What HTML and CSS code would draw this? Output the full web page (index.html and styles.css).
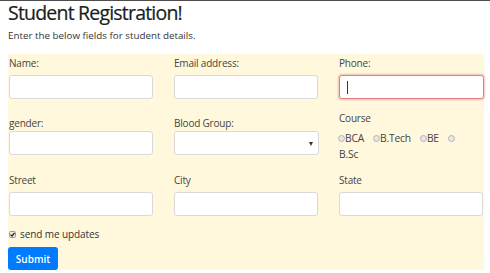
FILE: index.html
```html
<!DOCTYPE html>
<html>
<head>
<meta charset="utf-8">
<link rel="stylesheet" href="styles.css">
</head>
<body>
<h1 class="title">Student Registration!</h1>
<p class="lead">Enter the below fields for student details.</p>
<form class="panel">
  <div class="row row-1">
    <div class="field">
      <label class="lbl">Name:</label>
      <input class="ctl" type="text">
    </div>
    <div class="field">
      <label class="lbl">Email address:</label>
      <input class="ctl" type="text">
    </div>
    <div class="field">
      <label class="lbl">Phone:</label>
      <div class="focus-wrap">
        <input class="ctl ctl-focus" type="text">
        <span class="caret"></span>
      </div>
    </div>
  </div>
  <div class="row row-2">
    <div class="field">
      <label class="lbl lbl-tight">gender:</label>
      <input class="ctl" type="text">
    </div>
    <div class="field">
      <label class="lbl lbl-tight">Blood Group:</label>
      <div class="select">
        <span class="arrow"></span>
      </div>
    </div>
    <div class="field field-course">
      <label class="lbl">Course</label>
      <div class="radios">
        <span class="opt"><span class="dot"></span>BCA</span>
        <span class="opt"><span class="dot"></span>B.Tech</span>
        <span class="opt"><span class="dot"></span>BE</span>
        <span class="opt"><span class="dot"></span></span>
        <span class="opt">B.Sc</span>
      </div>
    </div>
  </div>
  <div class="row row-3">
    <div class="field">
      <label class="lbl">Street</label>
      <input class="ctl" type="text">
    </div>
    <div class="field">
      <label class="lbl">City</label>
      <input class="ctl" type="text">
    </div>
    <div class="field">
      <label class="lbl">State</label>
      <input class="ctl" type="text">
    </div>
  </div>
  <div class="check-row">
    <span class="check">
      <svg width="7" height="7" viewBox="0 0 7 7"><rect x="0.5" y="0.5" width="6" height="6" rx="1" fill="#e8e8e8" stroke="#9a9a9a"/><path d="M1.6 3.6 L3 5 L5.6 1.8" fill="none" stroke="#222" stroke-width="1.3"/></svg>
    </span>
    <span class="check-text">send me updates</span>
  </div>
  <button class="btn" type="button">Submit</button>
</form>
</body>
</html>
```
FILE: styles.css
```css
html, body {
  margin: 0;
  padding: 0;
}
body {
  width: 490px;
  height: 273px;
  overflow: hidden;
  border-top: 1px solid #4d4d4d;
  box-sizing: border-box;
  padding-left: 8px;
  font-family: "Open Sans", "Noto Sans", sans-serif;
  color: #212529;
  background: #fff;
}
.title {
  margin: 0;
  padding-top: 1px;
  font-size: 19.5px;
  font-weight: 500;
  line-height: 22px;
  letter-spacing: -0.8px;
  color: #1a1d20;
  -webkit-text-stroke: 0.2px #1a1d20;
}
.lead {
  margin: 5px 0 0 0;
  font-size: 9.8px;
  line-height: 14px;
  color: #333;
}
.panel {
  margin-top: 11px;
  width: 476px;
  background: #fff8dc;
  padding: 2px 1px 0 1px;
  box-sizing: border-box;
  display: flex;
  flex-direction: column;
}
.row {
  display: grid;
  grid-template-columns: 144px 144px 144px;
  column-gap: 21px;
  align-items: start;
}
.row-1 { margin-bottom: 17px; }
.row-2 { margin-bottom: 11px; }
.row-3 { margin-bottom: 11px; }
.field {
  display: flex;
  flex-direction: column;
}
.lbl {
  font-size: 10px;
  line-height: 14px;
  color: #444;
  margin-bottom: 5px;
  letter-spacing: -0.2px;
}
.lbl-tight { margin-bottom: 1px; }
.field-course { margin-top: -5px; }
.ctl {
  display: block;
  width: 144px;
  height: 24px;
  box-sizing: border-box;
  margin: 0;
  border: 1px solid #d9d9d9;
  border-radius: 3px;
  background: #fff;
  padding: 0 6px;
  outline: none;
}
.focus-wrap {
  position: relative;
  width: 145px;
}
.ctl-focus {
  width: 145px;
  border-color: #e57f86;
  box-shadow: 0 0 0 1.5px rgba(232, 110, 120, 0.3);
}
.caret {
  position: absolute;
  left: 8px;
  top: 6px;
  width: 1px;
  height: 13px;
  background: #333;
}
.select {
  position: relative;
  width: 145px;
  height: 24px;
  box-sizing: border-box;
  border: 1px solid #d9d9d9;
  border-radius: 3px;
  background: #fff;
}
.arrow {
  position: absolute;
  right: 5px;
  top: 10px;
  width: 0;
  height: 0;
  border-left: 2.5px solid transparent;
  border-right: 2.5px solid transparent;
  border-top: 4px solid #333;
}
.radios {
  display: flex;
  flex-wrap: wrap;
  width: 134px;
  font-size: 10.3px;
  line-height: 16px;
  color: #444;
  letter-spacing: -0.2px;
}
.opt {
  display: inline-flex;
  align-items: center;
  margin-right: 10px;
}
.dot {
  display: inline-block;
  width: 5px;
  height: 5px;
  border-radius: 50%;
  border: 1px solid #b5b5b5;
  background: #e6e6e6;
  margin-right: 0;
  margin-left: -1px;
}
.check-row {
  display: flex;
  align-items: center;
  height: 14px;
  font-size: 10px;
  color: #333;
}
.check {
  display: inline-flex;
  width: 7px;
  height: 7px;
  margin-right: 4px;
}
.check-text { letter-spacing: -0.1px; }
.btn {
  margin-top: 6px;
  width: 50px;
  height: 23px;
  padding: 0;
  border: 0;
  border-radius: 3px;
  background: #007bff;
  color: #fff;
  font-family: "Open Sans", "Noto Sans", sans-serif;
  font-size: 10px;
  font-weight: 600;
  margin-left: -1px;
}
```
